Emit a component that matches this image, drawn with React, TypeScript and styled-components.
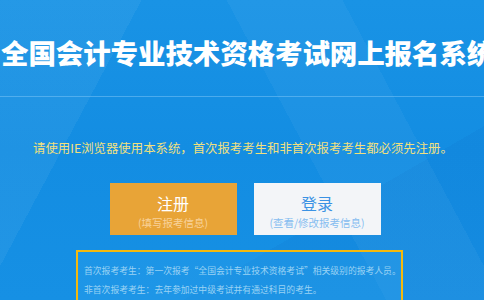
import styled, { createGlobalStyle } from 'styled-components';

const GlobalStyle = createGlobalStyle`
  html, body {
    margin: 0;
    padding: 0;
    background: #1590e3;
  }
  body {
    font-family: 'Noto Sans CJK SC', 'Noto Sans', sans-serif;
    overflow: hidden;
  }
`;

export default () => {
  return (
    <Page>
      <GlobalStyle />
      <Header>
        <Title>全国会计专业技术资格考试网上报名系统</Title>
      </Header>
      <Tip>请使用IE浏览器使用本系统，首次报考考生和非首次报考考生都必须先注册。</Tip>
      <ButtonRow>
        <ActionButton variant="register">
          <ButtonLabel>注册</ButtonLabel>
          <ButtonSub>(填写报考信息)</ButtonSub>
        </ActionButton>
        <ActionButton variant="login">
          <ButtonLabel>登录</ButtonLabel>
          <ButtonSub>(查看/修改报考信息)</ButtonSub>
        </ActionButton>
      </ButtonRow>
      <NoticeBox>
        <NoticeLine>首次报考考生：第一次报考“全国会计专业技术资格考试”相关级别的报考人员。</NoticeLine>
        <NoticeLine>非首次报考考生：去年参加过中级考试并有通过科目的考生。</NoticeLine>
      </NoticeBox>
    </Page>
  );
};

const Page = styled.div`
  width: 484px;
  height: 300px;
  overflow: hidden;
  background-color: #1590e3;
  background-image:
    linear-gradient(118deg, rgba(255, 255, 255, 0.05) 0 22%, transparent 22% 100%),
    linear-gradient(62deg, transparent 0 60%, rgba(255, 255, 255, 0.04) 60% 78%, transparent 78%),
    linear-gradient(150deg, transparent 0 70%, rgba(0, 60, 160, 0.06) 70%),
    linear-gradient(180deg, #1993e5 0%, #138de2 50%, #1690e4 100%);
`;

const Header = styled.div`
  height: 97px;
  box-sizing: border-box;
  padding: 37px 0 0 1px;
  border-bottom: 1px solid rgba(120, 195, 245, 0.55);
  overflow: hidden;
`;

const Title = styled.h1`
  margin: 0;
  color: #fff;
  font-size: 27.5px;
  line-height: 31px;
  font-weight: 900;
  white-space: nowrap;
  letter-spacing: -0.1px;
`;

const Tip = styled.p`
  margin: 42px 0 0;
  text-align: center;
  color: #f1e07e;
  font-size: 12.4px;
  line-height: 18px;
  white-space: nowrap;
  padding-left: 2px;
`;

const ButtonRow = styled.div`
  display: flex;
  justify-content: center;
  gap: 17px;
  margin-top: 26px;
  padding-left: 6px;
`;

const ActionButton = styled.div<{ variant: 'register' | 'login' }>`
  width: 127px;
  height: 52px;
  box-sizing: border-box;
  display: flex;
  flex-direction: column;
  align-items: center;
  padding-top: 10px;
  background: ${(p) => (p.variant === 'register' ? '#e8a437' : '#f3f5f8')};
  color: ${(p) => (p.variant === 'register' ? '#ffffff' : '#3a92e4')};
  cursor: pointer;

  span:last-child {
    color: ${(p) => (p.variant === 'register' ? '#f8d29a' : '#86bdf0')};
  }
`;

const ButtonLabel = styled.span`
  font-size: 16px;
  line-height: 21px;
`;

const ButtonSub = styled.span`
  font-size: 10.5px;
  line-height: 14px;
  margin-top: 2px;
`;

const NoticeBox = styled.div`
  width: 327px;
  box-sizing: border-box;
  margin: 15px 0 0 76px;
  padding: 9px 6px 6px;
  border: 2px solid #f5b90c;
  background: rgba(50, 165, 240, 0.3);
`;

const NoticeLine = styled.div`
  color: #9ad2f4;
  font-size: 8.8px;
  line-height: 19px;
  white-space: nowrap;
`;
